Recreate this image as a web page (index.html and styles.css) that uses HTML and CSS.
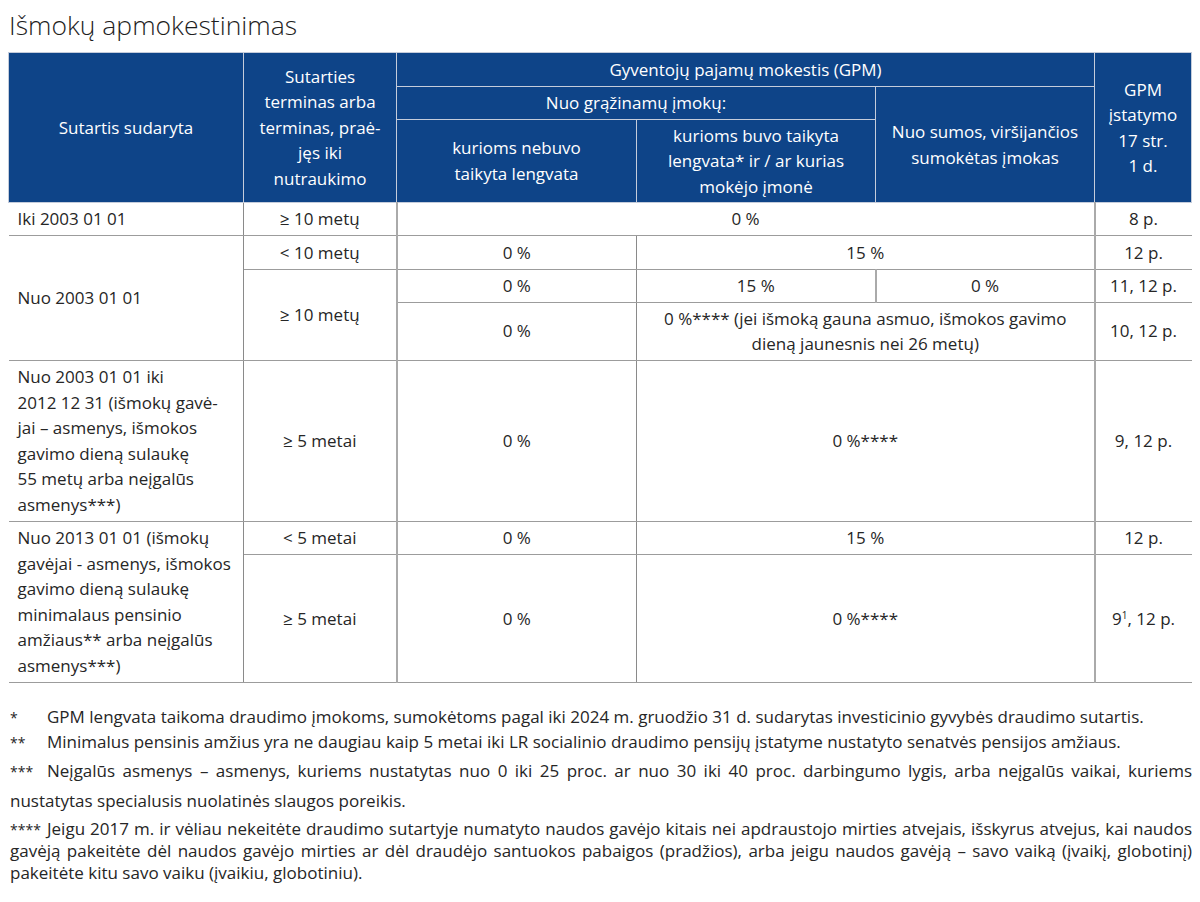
FILE: index.html
```html
<!DOCTYPE html>
<html lang="lt">
<head>
<meta charset="utf-8">
<title>Išmokų apmokestinimas</title>
<link rel="stylesheet" href="styles.css">
</head>
<body>
<div class="page">
  <h1 class="title">Išmokų apmokestinimas</h1>
  <table class="tax">
    <colgroup>
      <col class="c1"><col class="c2"><col class="c3"><col class="c4"><col class="c5"><col class="c6">
    </colgroup>
    <thead>
      <tr class="h1">
        <th rowspan="3">Sutartis sudaryta</th>
        <th rowspan="3">Sutarties<br>terminas arba<br>terminas, praė-<br>jęs iki<br>nutraukimo</th>
        <th colspan="3">Gyventojų pajamų mokestis (GPM)</th>
        <th rowspan="3">GPM<br>įstatymo<br>17 str.<br>1 d.</th>
      </tr>
      <tr class="h2">
        <th colspan="2">Nuo grąžinamų įmokų:</th>
        <th rowspan="2">Nuo sumos, viršijančios<br>sumokėtas įmokas</th>
      </tr>
      <tr class="h3">
        <th>kurioms nebuvo<br>taikyta lengvata</th>
        <th>kurioms buvo taikyta<br>lengvata* ir / ar kurias<br>mokėjo įmonė</th>
      </tr>
    </thead>
    <tbody>
      <tr class="r1">
        <td class="first">Iki 2003 01 01</td>
        <td>≥ 10 metų</td>
        <td class="tl" colspan="3">0 %</td>
        <td class="tl last">8 p.</td>
      </tr>
      <tr class="r2">
        <td class="first" rowspan="3">Nuo 2003 01 01</td>
        <td>&lt; 10 metų</td>
        <td class="tl">0 %</td>
        <td colspan="2">15 %</td>
        <td class="tl last">12 p.</td>
      </tr>
      <tr class="r3">
        <td rowspan="2">≥ 10 metų</td>
        <td class="tl">0 %</td>
        <td>15 %</td>
        <td class="tl">0 %</td>
        <td class="tl last">11, 12 p.</td>
      </tr>
      <tr class="r4">
        <td class="tl">0 %</td>
        <td colspan="2">0 %**** (jei išmoką gauna asmuo, išmokos gavimo<br>dieną jaunesnis nei 26 metų)</td>
        <td class="tl last">10, 12 p.</td>
      </tr>
      <tr class="r5">
        <td class="first">Nuo 2003 01 01 iki<br>2012 12 31 (išmokų gavė-<br>jai – asmenys, išmokos<br>gavimo dieną sulaukę<br>55 metų arba neįgalūs<br>asmenys***)</td>
        <td>≥ 5 metai</td>
        <td class="tl">0 %</td>
        <td colspan="2">0 %****</td>
        <td class="tl last">9, 12 p.</td>
      </tr>
      <tr class="r6">
        <td class="first" rowspan="2">Nuo 2013 01 01 (išmokų<br>gavėjai - asmenys, išmokos<br>gavimo dieną sulaukę<br>minimalaus pensinio<br>amžiaus** arba neįgalūs<br>asmenys***)</td>
        <td>&lt; 5 metai</td>
        <td class="tl">0 %</td>
        <td colspan="2">15 %</td>
        <td class="tl last">12 p.</td>
      </tr>
      <tr class="r7">
        <td>≥ 5 metai</td>
        <td class="tl">0 %</td>
        <td colspan="2">0 %****</td>
        <td class="tl last">9<sup>1</sup>, 12 p.</td>
      </tr>
    </tbody>
  </table>

  <div class="notes">
    <p class="n1"><span class="mark">*</span>GPM lengvata taikoma draudimo įmokoms, sumokėtoms pagal iki 2024 m. gruodžio 31 d. sudarytas investicinio gyvybės draudimo sutartis.</p>
    <p class="n2"><span class="mark">**</span>Minimalus pensinis amžius yra ne daugiau kaip 5 metai iki LR socialinio draudimo pensijų įstatyme nustatyto senatvės pensijos amžiaus.</p>
    <p class="n3"><span class="jline"><span class="mark">***</span>Neįgalūs asmenys – asmenys, kuriems nustatytas nuo 0 iki 25 proc. ar nuo 30 iki 40 proc. darbingumo lygis, arba neįgalūs vaikai, kuriems</span>nustatytas specialusis nuolatinės slaugos poreikis.</p>
    <p class="n4"><span class="jline"><span class="mark">****</span>Jeigu 2017 m. ir vėliau nekeitėte draudimo sutartyje numatyto naudos gavėjo kitais nei apdraustojo mirties atvejais, išskyrus atvejus, kai naudos</span><span class="jline">gavėją pakeitėte dėl naudos gavėjo mirties ar dėl draudėjo santuokos pabaigos (pradžios), arba jeigu naudos gavėją – savo vaiką (įvaikį, globotinį)</span>pakeitėte kitu savo vaiku (įvaikiu, globotiniu).</p>
  </div>
</div>
</body>
</html>
```

FILE: styles.css
```css
html, body {
  margin: 0;
  padding: 0;
  background: #ffffff;
}

body {
  font-family: "Open Sans", "Noto Sans", "DejaVu Sans", sans-serif;
  color: #262626;
}

.page {
  padding: 0 8px;
}

.title {
  margin: 0;
  padding: 8px 0 0 1px;
  height: 52px;
  box-sizing: border-box;
  font-size: 26.5px;
  line-height: 34px;
  font-weight: 300;
  color: #1e1e1e;
}

.tax {
  width: 1183px;
  table-layout: fixed;
  border-collapse: collapse;
  font-size: 17px;
  line-height: 25.5px;
}

.c1 { width: 235px; }
.c2 { width: 153px; }
.c3 { width: 240px; }
.c4 { width: 239px; }
.c5 { width: 219px; }
.c6 { width: 97px; }

.tax th {
  background: #0e4488;
  color: #ffffff;
  font-weight: 400;
  border: 1px solid #c4ccdb;
  padding: 3px 4px;
  text-align: center;
  vertical-align: middle;
  white-space: nowrap;
}

.tax .h1 { height: 34px; }
.tax .h2 { height: 31px; }
.tax .h3 { height: 83px; }

.tax td {
  border-top: 1px solid #9c9c9c;
  border-bottom: 1px solid #9c9c9c;
  border-left: 1px solid #8a8a8a;
  border-right: 1px solid #8a8a8a;
  padding: 3px 4px;
  text-align: center;
  vertical-align: middle;
  white-space: nowrap;
}

.tax td.first {
  text-align: left;
  padding-left: 9px;
  border-left: none;
}

.tax td.last {
  border-right: none;
}

.tax td.tl {
  border-left: 2px solid #aaaaaa;
}

.tax .r1 { height: 32.5px; }
.tax .r2 { height: 34.5px; }
.tax .r3 { height: 32.5px; }
.tax .r4 { height: 57.5px; }
.tax .r5 { height: 161px; }
.tax .r6 { height: 33.5px; }
.tax .r7 { height: 127.5px; }

.tax sup {
  font-size: 10px;
  line-height: 0;
  vertical-align: 6px;
}

.notes {
  margin-top: 23px;
  font-size: 17px;
  color: #262626;
  padding-left: 2px;
}

.notes p {
  margin: 0 0 2px 0;
  line-height: 22px;
}

.mark {
  display: inline-block;
  width: 37px;
  font-size: 14px;
}

.notes .n3 {
  line-height: 29px;
  margin-bottom: 3px;
}

.notes .n4 {
  line-height: 21.5px;
}

.jline {
  display: block;
  text-align: justify;
  text-align-last: justify;
}
```
